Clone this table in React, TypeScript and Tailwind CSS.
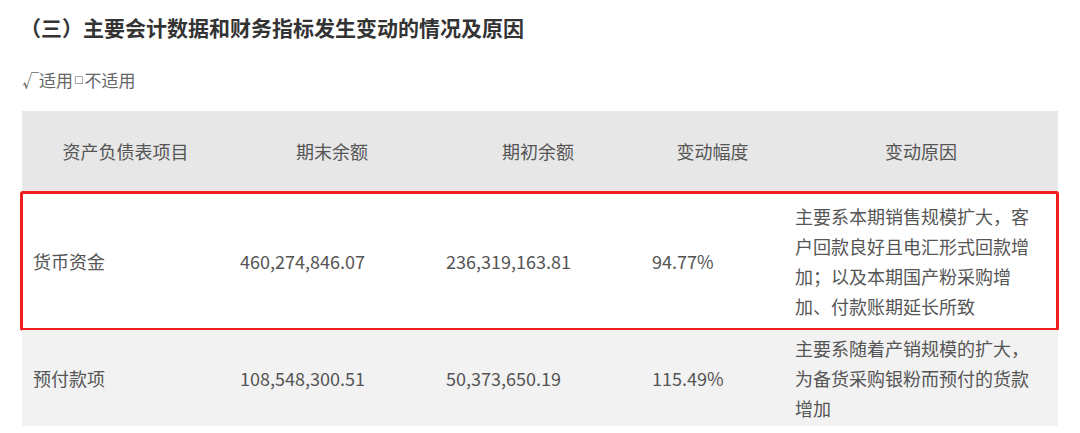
const font = { fontFamily: '"Noto Sans CJK SC", "Noto Sans", sans-serif' };

type Row = {
  item: string;
  end: string;
  start: string;
  change: string;
  reason: string[];
};

const rows: Row[] = [
  {
    item: '货币资金',
    end: '460,274,846.07',
    start: '236,319,163.81',
    change: '94.77%',
    reason: ['主要系本期销售规模扩大，客', '户回款良好且电汇形式回款增', '加；以及本期国产粉采购增', '加、付款账期延长所致'],
  },
  {
    item: '预付款项',
    end: '108,548,300.51',
    start: '50,373,650.19',
    change: '115.49%',
    reason: ['主要系随着产销规模的扩大，', '为备货采购银粉而预付的货款', '增加'],
  },
];

const cols = ['w-[207px]', 'w-[206px]', 'w-[206px]', 'w-[143px]', 'w-[274px]'];
const heads = ['资产负债表项目', '期末余额', '期初余额', '变动幅度', '变动原因'];

export default function App() {
  return (
    <div className="h-[433px] w-[1080px] overflow-hidden bg-white" style={font}>
      <h2 className="pl-[20px] pt-[12px] text-[21px] font-bold leading-[30px] text-[#333]">
        （三）主要会计数据和财务指标发生变动的情况及原因
      </h2>
      <p className="mt-[26px] flex items-center pl-[22px] text-[17px] leading-[24px] text-[#666]">
        <span>√适用</span>
        <span className="mx-[1px] font-['DejaVu_Sans',sans-serif] text-[10px] leading-none">□</span>
        <span>不适用</span>
      </p>

      <div className="ml-[22px] mt-[19px] w-[1036px] text-[18px] text-[#555]">
        <div className="flex h-[81px] items-center bg-[#e7e7e7]">
          {heads.map((h, i) => (
            <div key={h} className={`${cols[i]} text-center`}>
              {h}
            </div>
          ))}
        </div>

        {rows.map((r, idx) => (
          <div
            key={r.item}
            className={`relative flex items-center ${idx === 0 ? 'h-[138px] bg-white' : 'h-[96px] bg-[#f2f2f2]'}`}
          >
            <div className={`${cols[0]} pl-[11px]`}>{r.item}</div>
            <div className={`${cols[1]} pl-[11px]`}>{r.end}</div>
            <div className={`${cols[2]} pl-[11px]`}>{r.start}</div>
            <div className={`${cols[3]} pl-[11px]`}>{r.change}</div>
            <div className={`${cols[4]} pl-[11px] leading-[30px]`}>
              {r.reason.map(l => (
                <div key={l} className="whitespace-nowrap">
                  {l}
                </div>
              ))}
            </div>
            {idx === 0 && (
              <div className="pointer-events-none absolute -left-[2px] -right-[1px] -top-[1px] bottom-[-1px] rounded-[3px] border-[3px] border-[#f41d1d]" />
            )}
          </div>
        ))}
      </div>
    </div>
  );
}
